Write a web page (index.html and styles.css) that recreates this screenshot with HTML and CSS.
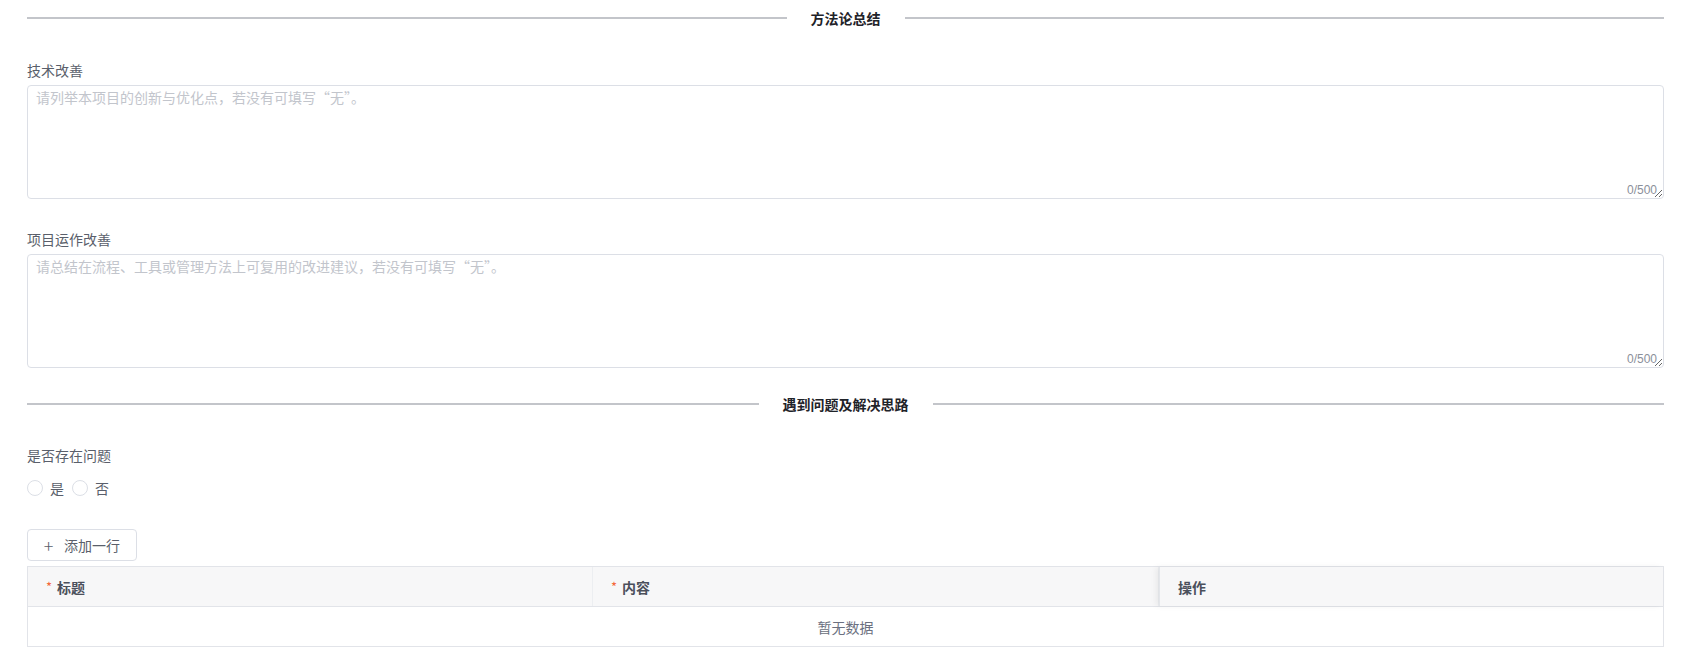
FILE: index.html
```html
<!DOCTYPE html>
<html lang="zh-CN">
<head>
<meta charset="utf-8">
<title>方法论总结</title>
<link rel="stylesheet" href="styles.css">
</head>
<body>
<div class="page">
  <div class="divider"><span class="divider-text">方法论总结</span></div>

  <div class="form-item first">
    <div class="label">技术改善</div>
    <div class="textarea-wrap">
      <textarea class="textarea" placeholder="请列举本项目的创新与优化点，若没有可填写“无”。"></textarea>
      <span class="count">0/500</span>
    </div>
  </div>

  <div class="form-item">
    <div class="label">项目运作改善</div>
    <div class="textarea-wrap">
      <textarea class="textarea" placeholder="请总结在流程、工具或管理方法上可复用的改进建议，若没有可填写“无”。"></textarea>
      <span class="count">0/500</span>
    </div>
  </div>

  <div class="divider second"><span class="divider-text">遇到问题及解决思路</span></div>

  <div class="form-item radio-item">
    <div class="label">是否存在问题</div>
    <div class="radios">
      <label class="radio"><span class="radio-circle"></span><span class="radio-text">是</span></label>
      <label class="radio"><span class="radio-circle"></span><span class="radio-text">否</span></label>
    </div>
  </div>

  <button class="add-btn" type="button"><span class="plus">+</span><span>添加一行</span></button>

  <div class="table">
    <div class="thead">
      <div class="th"><span class="req">*</span>标题</div>
      <div class="th"><span class="req">*</span>内容</div>
      <div class="th fixed">操作</div>
    </div>
    <div class="empty">暂无数据</div>
  </div>
</div>
</body>
</html>
```

FILE: styles.css
```css
* { box-sizing: border-box; }
html, body {
  margin: 0;
  padding: 0;
  background: #fff;
}
body {
  font-family: "Noto Sans CJK SC", "Noto Sans", "Liberation Sans", sans-serif;
  font-size: 14px;
  color: #5a5f6b;
}
.page {
  padding: 0 24px 0 27px;
  display: flex;
  flex-direction: column;
}
.divider {
  height: 36px;
  display: flex;
  align-items: center;
  gap: 24px;
}
.divider::before,
.divider::after {
  content: "";
  flex: 1;
  height: 2px;
  background: #c3c5ca;
}
.divider-text {
  font-weight: 700;
  font-size: 14px;
  line-height: 20px;
  color: #1f2329;
}
.divider.second {
  margin-top: 18px;
}
.form-item {
  display: flex;
  flex-direction: column;
  margin-top: 30px;
}
.form-item.first {
  margin-top: 24px;
}
.label {
  font-size: 14px;
  line-height: 20px;
  color: #5a5f6b;
  margin-bottom: 5px;
}
.textarea-wrap {
  position: relative;
}
.textarea {
  display: block;
  width: 100%;
  height: 114px;
  border: 1px solid #dcdfe6;
  border-radius: 4px;
  padding: 1px 8px 4px;
  font-family: inherit;
  font-size: 14px;
  line-height: 20px;
  color: #333;
  resize: vertical;
  outline: none;
  background: #fff;
}
.textarea::placeholder {
  color: #c2c5cc;
}
.count {
  position: absolute;
  right: 7px;
  bottom: 1px;
  font-size: 12px;
  line-height: 16px;
  color: #8b909a;
  font-family: "Liberation Sans", "Noto Sans", sans-serif;
}
.radio-item {
  margin-top: 23px;
}
.radio-item .label {
  margin-bottom: 12px;
}
.radios {
  display: flex;
  align-items: center;
  height: 22px;
}
.radio {
  display: flex;
  align-items: center;
  margin-right: 8px;
}
.radio-circle {
  width: 16px;
  height: 16px;
  border: 1px solid #dcdfe6;
  border-radius: 50%;
  background: #fff;
}
.radio-text {
  margin-left: 7px;
  font-size: 14px;
  line-height: 22px;
  color: #5a5f6b;
}
.add-btn {
  align-self: flex-start;
  margin-top: 30px;
  width: 110px;
  height: 32px;
  border: 1px solid #dcdfe6;
  border-radius: 4px;
  background: #fff;
  display: flex;
  align-items: center;
  padding: 0 0 0 15px;
  font-family: inherit;
  font-size: 14px;
  color: #5a5f6b;
  gap: 10px;
}
.plus {
  font-size: 18px;
  line-height: 18px;
  font-weight: 300;
  width: 11px;
  text-align: center;
}
.table {
  margin-top: 5px;
  border: 1px solid #e2e4e9;
}
.thead {
  display: grid;
  grid-template-columns: 565px 566px 1fr;
  background: #f7f7f8;
  height: 40px;
  border-bottom: 1px solid #e2e4e9;
}
.th {
  display: flex;
  align-items: center;
  padding-left: 18px;
  font-weight: 600;
  font-size: 14px;
  color: #4b505c;
  border-right: 1px solid #eceef1;
}
.th.fixed {
  border-right: none;
  box-shadow: -3px 0 6px rgba(0, 0, 0, 0.06);
  border-left: 1px solid #e4e6ea;
}
.req {
  color: #f4673b;
  font-weight: 400;
  font-size: 13px;
  margin-right: 5px;
}
.empty {
  height: 39px;
  display: flex;
  align-items: center;
  justify-content: center;
  font-size: 14px;
  color: #6b7080;
}
```
